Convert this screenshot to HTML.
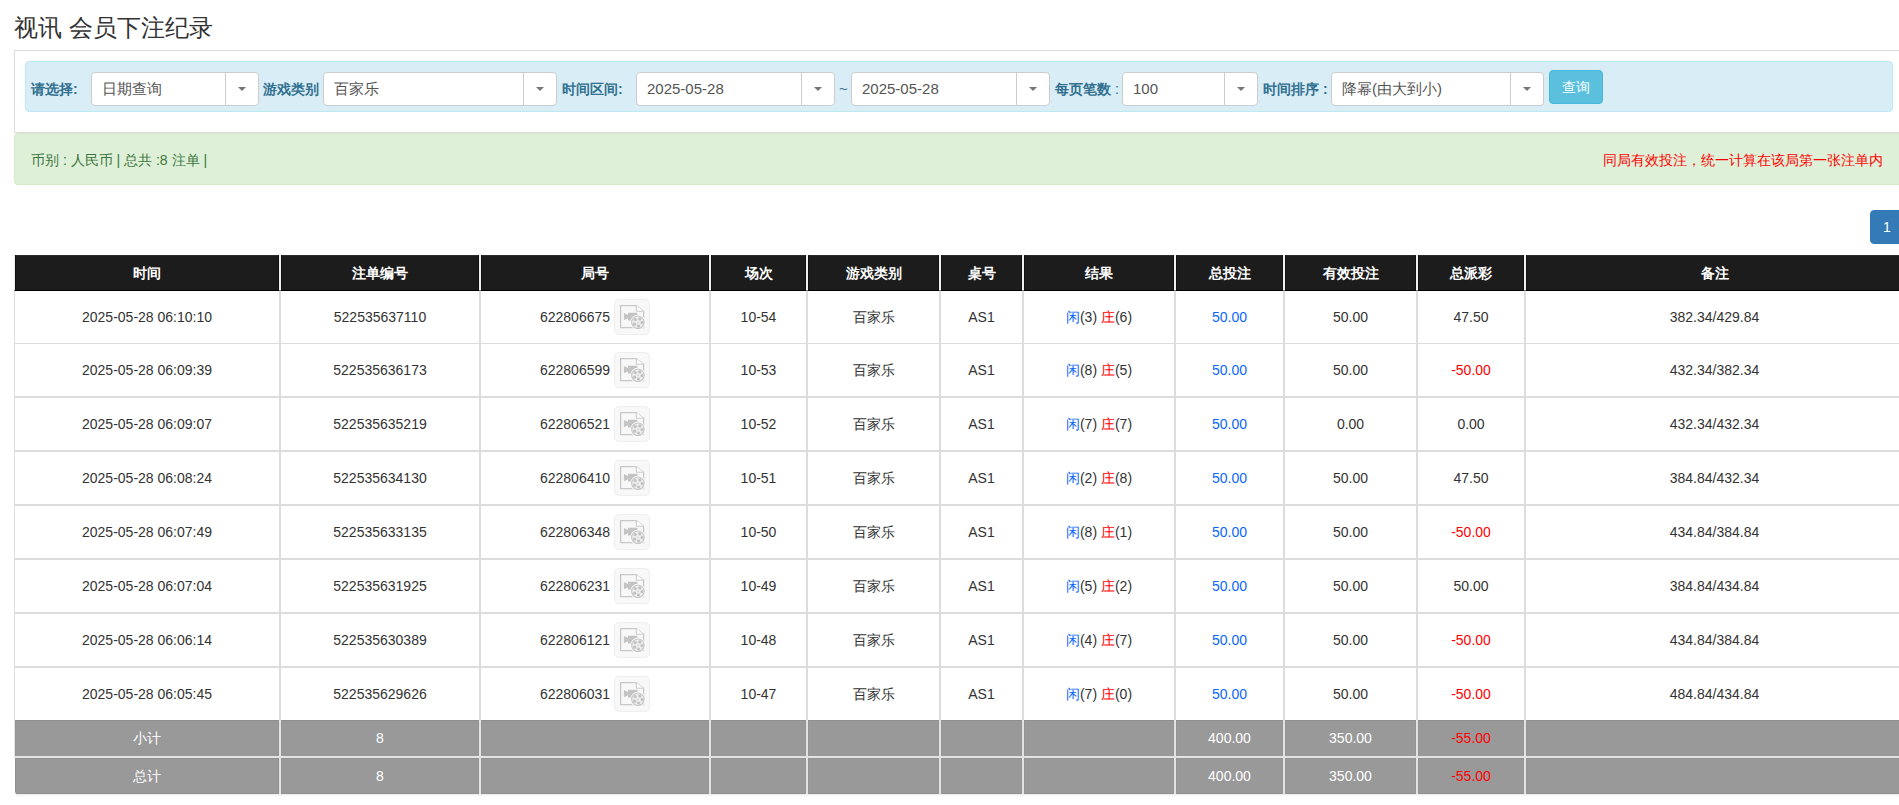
<!DOCTYPE html>
<html><head><meta charset="utf-8">
<style>
*{box-sizing:border-box}
html,body{margin:0;padding:0;background:#fff;overflow:hidden}
body{width:1899px;height:805px;position:relative;font-family:"Liberation Sans",sans-serif;font-size:14px;color:#333;line-height:20px}
.abs{position:absolute}
h3{position:absolute;left:14px;top:14px;margin:0;font-size:24px;font-weight:normal;line-height:28px;color:#333}
.panel{position:absolute;left:14px;top:50px;width:1900px;height:83px;border:1px solid #ddd;border-bottom-color:#ddd}
.well{position:absolute;left:25px;top:61px;width:1868px;height:51px;background:#d9edf7;border:1px solid #bce8f1;border-radius:4px}
.lbl{position:absolute;top:79px;font-weight:bold;color:#31708f;line-height:20px;white-space:nowrap}
.sel{position:absolute;top:72px;height:34px;background:#fff;border:1px solid #ccc;border-radius:4px;color:#555;font-size:15px;line-height:20px;padding:6px 0 0 10px;white-space:nowrap}
.sel .dv{position:absolute;top:0;bottom:0;width:1px;background:#ccc}
.sel .cr{position:absolute;top:14px;width:0;height:0;border-left:4px solid transparent;border-right:4px solid transparent;border-top:4px solid #777}
.btn{position:absolute;left:1549px;top:70px;width:54px;height:34px;background:#5bc0de;border:1px solid #46b8da;border-radius:4px;color:#fff;text-align:center;line-height:20px;padding-top:6px}
.alert{position:absolute;left:14px;top:133px;width:1900px;height:52px;background:#dff0d8;border:1px solid #d6e9c6;border-radius:4px;color:#3c763d}
.pg{position:absolute;left:1870px;top:210px;width:34px;height:34px;background:#337ab7;border:1px solid #337ab7;border-radius:4px 0 0 4px;color:#fff;padding:6px 0 0 12px;line-height:20px}
table{position:absolute;left:14px;top:255px;border-collapse:separate;border-spacing:0;table-layout:fixed;width:1890px}
th{background:#1c1c1c;color:#fff;font-weight:bold;height:36px;padding:0;text-align:center;border-left:1px solid #f0f0f0;border-right:1px solid #f0f0f0;border-bottom:1px solid #000;box-shadow:inset 1px 0 #111,inset -1px 0 #111,inset 0 1px #2a2a2a}
th:first-child{border-left:1px solid #e8e8e8}
td{text-align:center;padding:0;border:1px solid #ddd;border-top:none;border-bottom-width:2px;height:54px;white-space:nowrap}
tbody tr:first-child td{border-bottom-width:1px;height:53px}
tbody tr.last td{border-bottom:none;height:52px}
tr.sum td{background:#999;color:#fff;height:37px;border-color:#e3e3e3;border-top:none;border-bottom:1px solid #e3e3e3;box-shadow:inset 0 1px #8f8f8f,inset 1px 0 #959595,inset -1px 0 #959595}
tr.sum2 td{border-top:1px solid #e3e3e3;border-bottom:none;box-shadow:inset 0 1px #939393,inset 1px 0 #959595,inset -1px 0 #959595,inset 0 -1px #8f8f8f}
tr.sum2 td:first-child{border-left-color:#fff;border-bottom-left-radius:3px;box-shadow:inset 1px 0 #8f8f8f,inset 0 -1px #8f8f8f,inset 0 1px #8f8f8f,inset -1px 0 #8f8f8f}
.shd{position:absolute;left:16px;top:794px;width:1890px;height:3px;background:linear-gradient(#ececec,#fafafa 70%,#fff)}
.b{color:#0a66ff}.r,tr.sum td.r{color:#f00}
.ju{padding-top:2px}
.ic{display:inline-block;width:36px;height:36px;vertical-align:middle;margin-left:4px;background:#f8f8f8;border:1px solid #eee;border-radius:5px;position:relative;top:-1px}
.ic svg{position:absolute;left:-1px;top:-1px}
</style></head><body>
<h3>视讯 会员下注纪录</h3>
<div class="panel"></div>
<div class="well"></div>
<div class="lbl" style="left:31px">请选择:</div>
<div class="sel" style="left:91px;width:168px">日期查询<span class="dv" style="left:133px"></span><span class="cr" style="left:146px"></span></div>
<div class="lbl" style="left:263px">游戏类别</div>
<div class="sel" style="left:323px;width:234px">百家乐<span class="dv" style="left:199px"></span><span class="cr" style="left:212px"></span></div>
<div class="lbl" style="left:562px">时间区间:</div>
<div class="sel" style="left:636px;width:199px">2025-05-28<span class="dv" style="left:164px"></span><span class="cr" style="left:177px"></span></div>
<div class="abs" style="left:839px;top:79px;color:#31708f;font-size:15px">~</div>
<div class="sel" style="left:851px;width:199px">2025-05-28<span class="dv" style="left:164px"></span><span class="cr" style="left:177px"></span></div>
<div class="lbl" style="left:1055px">每页笔数<span style="font-weight:normal"> :</span></div>
<div class="sel" style="left:1122px;width:136px">100<span class="dv" style="left:101px"></span><span class="cr" style="left:114px"></span></div>
<div class="lbl" style="left:1263px">时间排序 :</div>
<div class="sel" style="left:1331px;width:213px">降幂(由大到小)<span class="dv" style="left:178px"></span><span class="cr" style="left:191px"></span></div>
<div class="btn">查询</div>
<div class="alert"></div>
<div class="abs" style="left:31px;top:150px;color:#3c763d">币别 : 人民币 | 总共 :8 注单 |</div>
<div class="abs" style="left:1603px;top:150px;color:#f00">同局有效投注，统一计算在该局第一张注单内</div>
<div class="pg">1</div>
<div class="shd"></div>
<!--TABLE--><table><colgroup><col style="width:266px"><col style="width:200px"><col style="width:230px"><col style="width:97px"><col style="width:133px"><col style="width:83px"><col style="width:152px"><col style="width:109px"><col style="width:133px"><col style="width:108px"><col style="width:379px"></colgroup><thead><tr><th>时间</th><th>注单编号</th><th>局号</th><th>场次</th><th>游戏类别</th><th>桌号</th><th>结果</th><th>总投注</th><th>有效投注</th><th>总派彩</th><th>备注</th></tr></thead><tbody><tr><td>2025-05-28 06:10:10</td><td>522535637110</td><td class="ju">622806675<span class="ic"><svg width="36" height="36" viewBox="0 0 36 36"><path d="M6.6 6.6H22.3L29.6 12.2V28.6H6.6Z" fill="none" stroke="#c8c8c8" stroke-width="1.3"/><path d="M22.3 6.6V12.2H29.6" fill="#fff" stroke="#c8c8c8" stroke-width="1"/><path d="M9.9 13.9L14 16V13.8H23.4V21.4H14V19.2L9.9 21.3Z" fill="#c4c4c4"/><circle cx="23.9" cy="23.3" r="7.6" fill="#fff"/><circle cx="23.9" cy="23.3" r="6.3" fill="#ececec" stroke="#c8c8c8" stroke-width="1.1"/><g fill="#c2c2c2"><circle cx="21.1" cy="20.5" r="1.6"/><circle cx="25.8" cy="19.9" r="1.6"/><circle cx="28.1" cy="23.6" r="1.6"/><circle cx="24.5" cy="27" r="1.6"/><circle cx="20.6" cy="25.2" r="1.6"/><circle cx="23.9" cy="23.3" r="0.6"/></g></svg></span></td><td>10-54</td><td>百家乐</td><td>AS1</td><td><span class="b">闲</span>(3) <span class="r">庄</span>(6)</td><td class="b">50.00</td><td>50.00</td><td>47.50</td><td>382.34/429.84</td></tr><tr><td>2025-05-28 06:09:39</td><td>522535636173</td><td class="ju">622806599<span class="ic"><svg width="36" height="36" viewBox="0 0 36 36"><path d="M6.6 6.6H22.3L29.6 12.2V28.6H6.6Z" fill="none" stroke="#c8c8c8" stroke-width="1.3"/><path d="M22.3 6.6V12.2H29.6" fill="#fff" stroke="#c8c8c8" stroke-width="1"/><path d="M9.9 13.9L14 16V13.8H23.4V21.4H14V19.2L9.9 21.3Z" fill="#c4c4c4"/><circle cx="23.9" cy="23.3" r="7.6" fill="#fff"/><circle cx="23.9" cy="23.3" r="6.3" fill="#ececec" stroke="#c8c8c8" stroke-width="1.1"/><g fill="#c2c2c2"><circle cx="21.1" cy="20.5" r="1.6"/><circle cx="25.8" cy="19.9" r="1.6"/><circle cx="28.1" cy="23.6" r="1.6"/><circle cx="24.5" cy="27" r="1.6"/><circle cx="20.6" cy="25.2" r="1.6"/><circle cx="23.9" cy="23.3" r="0.6"/></g></svg></span></td><td>10-53</td><td>百家乐</td><td>AS1</td><td><span class="b">闲</span>(8) <span class="r">庄</span>(5)</td><td class="b">50.00</td><td>50.00</td><td class="r">-50.00</td><td>432.34/382.34</td></tr><tr><td>2025-05-28 06:09:07</td><td>522535635219</td><td class="ju">622806521<span class="ic"><svg width="36" height="36" viewBox="0 0 36 36"><path d="M6.6 6.6H22.3L29.6 12.2V28.6H6.6Z" fill="none" stroke="#c8c8c8" stroke-width="1.3"/><path d="M22.3 6.6V12.2H29.6" fill="#fff" stroke="#c8c8c8" stroke-width="1"/><path d="M9.9 13.9L14 16V13.8H23.4V21.4H14V19.2L9.9 21.3Z" fill="#c4c4c4"/><circle cx="23.9" cy="23.3" r="7.6" fill="#fff"/><circle cx="23.9" cy="23.3" r="6.3" fill="#ececec" stroke="#c8c8c8" stroke-width="1.1"/><g fill="#c2c2c2"><circle cx="21.1" cy="20.5" r="1.6"/><circle cx="25.8" cy="19.9" r="1.6"/><circle cx="28.1" cy="23.6" r="1.6"/><circle cx="24.5" cy="27" r="1.6"/><circle cx="20.6" cy="25.2" r="1.6"/><circle cx="23.9" cy="23.3" r="0.6"/></g></svg></span></td><td>10-52</td><td>百家乐</td><td>AS1</td><td><span class="b">闲</span>(7) <span class="r">庄</span>(7)</td><td class="b">50.00</td><td>0.00</td><td>0.00</td><td>432.34/432.34</td></tr><tr><td>2025-05-28 06:08:24</td><td>522535634130</td><td class="ju">622806410<span class="ic"><svg width="36" height="36" viewBox="0 0 36 36"><path d="M6.6 6.6H22.3L29.6 12.2V28.6H6.6Z" fill="none" stroke="#c8c8c8" stroke-width="1.3"/><path d="M22.3 6.6V12.2H29.6" fill="#fff" stroke="#c8c8c8" stroke-width="1"/><path d="M9.9 13.9L14 16V13.8H23.4V21.4H14V19.2L9.9 21.3Z" fill="#c4c4c4"/><circle cx="23.9" cy="23.3" r="7.6" fill="#fff"/><circle cx="23.9" cy="23.3" r="6.3" fill="#ececec" stroke="#c8c8c8" stroke-width="1.1"/><g fill="#c2c2c2"><circle cx="21.1" cy="20.5" r="1.6"/><circle cx="25.8" cy="19.9" r="1.6"/><circle cx="28.1" cy="23.6" r="1.6"/><circle cx="24.5" cy="27" r="1.6"/><circle cx="20.6" cy="25.2" r="1.6"/><circle cx="23.9" cy="23.3" r="0.6"/></g></svg></span></td><td>10-51</td><td>百家乐</td><td>AS1</td><td><span class="b">闲</span>(2) <span class="r">庄</span>(8)</td><td class="b">50.00</td><td>50.00</td><td>47.50</td><td>384.84/432.34</td></tr><tr><td>2025-05-28 06:07:49</td><td>522535633135</td><td class="ju">622806348<span class="ic"><svg width="36" height="36" viewBox="0 0 36 36"><path d="M6.6 6.6H22.3L29.6 12.2V28.6H6.6Z" fill="none" stroke="#c8c8c8" stroke-width="1.3"/><path d="M22.3 6.6V12.2H29.6" fill="#fff" stroke="#c8c8c8" stroke-width="1"/><path d="M9.9 13.9L14 16V13.8H23.4V21.4H14V19.2L9.9 21.3Z" fill="#c4c4c4"/><circle cx="23.9" cy="23.3" r="7.6" fill="#fff"/><circle cx="23.9" cy="23.3" r="6.3" fill="#ececec" stroke="#c8c8c8" stroke-width="1.1"/><g fill="#c2c2c2"><circle cx="21.1" cy="20.5" r="1.6"/><circle cx="25.8" cy="19.9" r="1.6"/><circle cx="28.1" cy="23.6" r="1.6"/><circle cx="24.5" cy="27" r="1.6"/><circle cx="20.6" cy="25.2" r="1.6"/><circle cx="23.9" cy="23.3" r="0.6"/></g></svg></span></td><td>10-50</td><td>百家乐</td><td>AS1</td><td><span class="b">闲</span>(8) <span class="r">庄</span>(1)</td><td class="b">50.00</td><td>50.00</td><td class="r">-50.00</td><td>434.84/384.84</td></tr><tr><td>2025-05-28 06:07:04</td><td>522535631925</td><td class="ju">622806231<span class="ic"><svg width="36" height="36" viewBox="0 0 36 36"><path d="M6.6 6.6H22.3L29.6 12.2V28.6H6.6Z" fill="none" stroke="#c8c8c8" stroke-width="1.3"/><path d="M22.3 6.6V12.2H29.6" fill="#fff" stroke="#c8c8c8" stroke-width="1"/><path d="M9.9 13.9L14 16V13.8H23.4V21.4H14V19.2L9.9 21.3Z" fill="#c4c4c4"/><circle cx="23.9" cy="23.3" r="7.6" fill="#fff"/><circle cx="23.9" cy="23.3" r="6.3" fill="#ececec" stroke="#c8c8c8" stroke-width="1.1"/><g fill="#c2c2c2"><circle cx="21.1" cy="20.5" r="1.6"/><circle cx="25.8" cy="19.9" r="1.6"/><circle cx="28.1" cy="23.6" r="1.6"/><circle cx="24.5" cy="27" r="1.6"/><circle cx="20.6" cy="25.2" r="1.6"/><circle cx="23.9" cy="23.3" r="0.6"/></g></svg></span></td><td>10-49</td><td>百家乐</td><td>AS1</td><td><span class="b">闲</span>(5) <span class="r">庄</span>(2)</td><td class="b">50.00</td><td>50.00</td><td>50.00</td><td>384.84/434.84</td></tr><tr><td>2025-05-28 06:06:14</td><td>522535630389</td><td class="ju">622806121<span class="ic"><svg width="36" height="36" viewBox="0 0 36 36"><path d="M6.6 6.6H22.3L29.6 12.2V28.6H6.6Z" fill="none" stroke="#c8c8c8" stroke-width="1.3"/><path d="M22.3 6.6V12.2H29.6" fill="#fff" stroke="#c8c8c8" stroke-width="1"/><path d="M9.9 13.9L14 16V13.8H23.4V21.4H14V19.2L9.9 21.3Z" fill="#c4c4c4"/><circle cx="23.9" cy="23.3" r="7.6" fill="#fff"/><circle cx="23.9" cy="23.3" r="6.3" fill="#ececec" stroke="#c8c8c8" stroke-width="1.1"/><g fill="#c2c2c2"><circle cx="21.1" cy="20.5" r="1.6"/><circle cx="25.8" cy="19.9" r="1.6"/><circle cx="28.1" cy="23.6" r="1.6"/><circle cx="24.5" cy="27" r="1.6"/><circle cx="20.6" cy="25.2" r="1.6"/><circle cx="23.9" cy="23.3" r="0.6"/></g></svg></span></td><td>10-48</td><td>百家乐</td><td>AS1</td><td><span class="b">闲</span>(4) <span class="r">庄</span>(7)</td><td class="b">50.00</td><td>50.00</td><td class="r">-50.00</td><td>434.84/384.84</td></tr><tr class="last"><td>2025-05-28 06:05:45</td><td>522535629626</td><td class="ju">622806031<span class="ic"><svg width="36" height="36" viewBox="0 0 36 36"><path d="M6.6 6.6H22.3L29.6 12.2V28.6H6.6Z" fill="none" stroke="#c8c8c8" stroke-width="1.3"/><path d="M22.3 6.6V12.2H29.6" fill="#fff" stroke="#c8c8c8" stroke-width="1"/><path d="M9.9 13.9L14 16V13.8H23.4V21.4H14V19.2L9.9 21.3Z" fill="#c4c4c4"/><circle cx="23.9" cy="23.3" r="7.6" fill="#fff"/><circle cx="23.9" cy="23.3" r="6.3" fill="#ececec" stroke="#c8c8c8" stroke-width="1.1"/><g fill="#c2c2c2"><circle cx="21.1" cy="20.5" r="1.6"/><circle cx="25.8" cy="19.9" r="1.6"/><circle cx="28.1" cy="23.6" r="1.6"/><circle cx="24.5" cy="27" r="1.6"/><circle cx="20.6" cy="25.2" r="1.6"/><circle cx="23.9" cy="23.3" r="0.6"/></g></svg></span></td><td>10-47</td><td>百家乐</td><td>AS1</td><td><span class="b">闲</span>(7) <span class="r">庄</span>(0)</td><td class="b">50.00</td><td>50.00</td><td class="r">-50.00</td><td>484.84/434.84</td></tr><tr class="sum"><td>小计</td><td>8</td><td></td><td></td><td></td><td></td><td></td><td>400.00</td><td>350.00</td><td class="r">-55.00</td><td></td></tr><tr class="sum sum2"><td>总计</td><td>8</td><td></td><td></td><td></td><td></td><td></td><td>400.00</td><td>350.00</td><td class="r">-55.00</td><td></td></tr></tbody></table><!--/TABLE-->
</body></html>
